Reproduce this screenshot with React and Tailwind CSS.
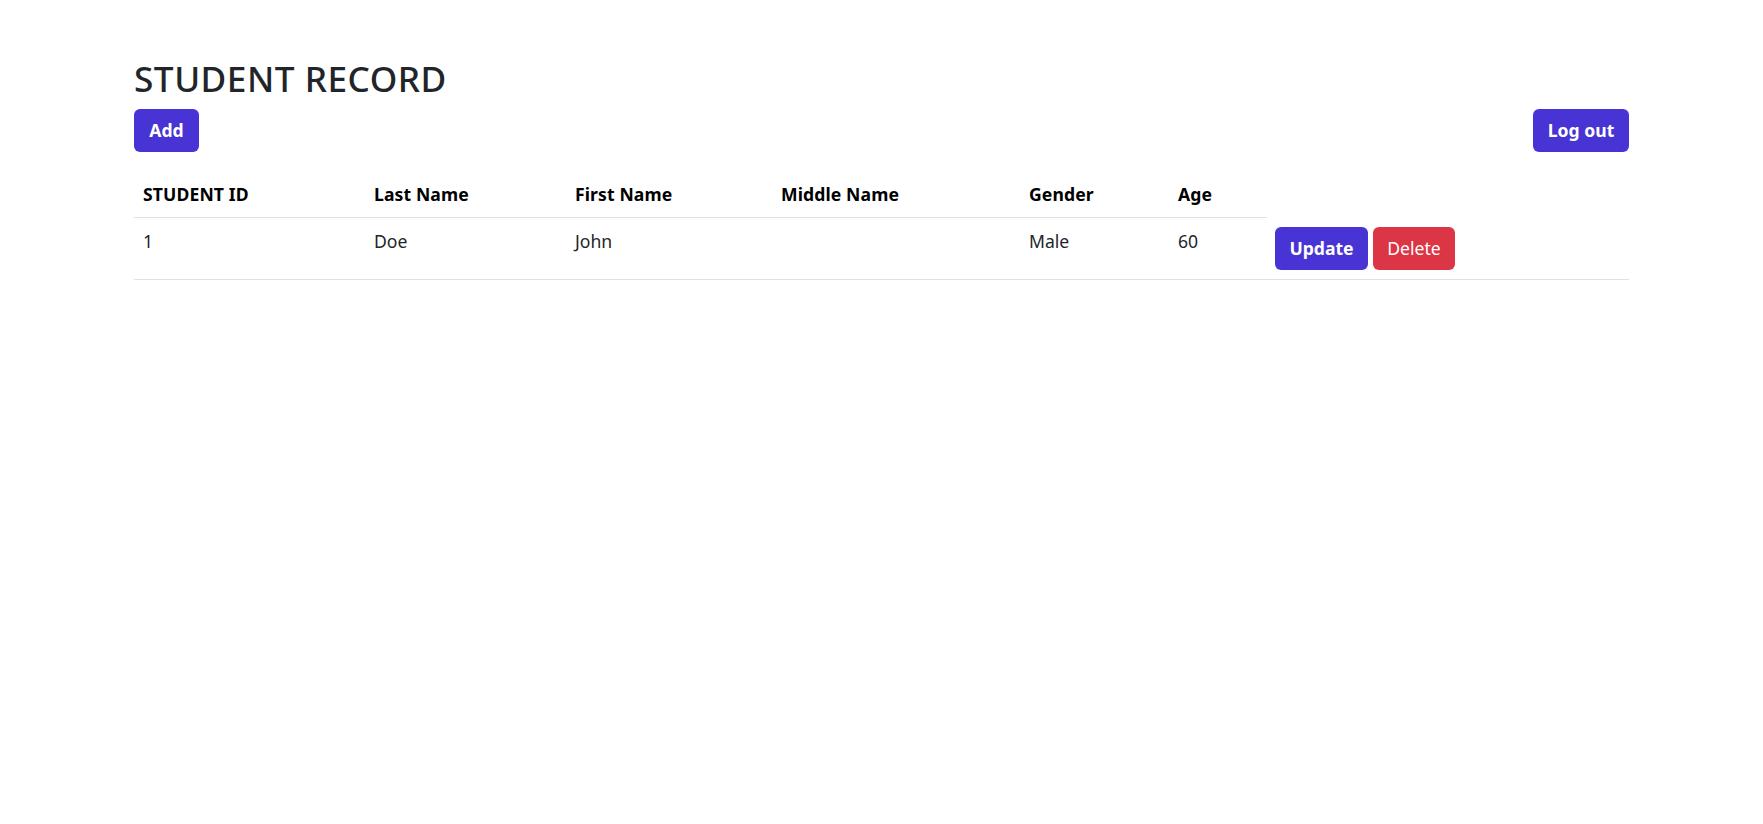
export default function App() {
  const cols = [
    "STUDENT ID",
    "Last Name",
    "First Name",
    "Middle Name",
    "Gender",
    "Age",
  ];
  const row = ["1", "Doe", "John", "", "Male", "60"];
  return (
    <div className="min-h-screen bg-white text-[#212529] font-['Noto_Sans',sans-serif]">
      <div className="mx-auto w-[1495px] pt-[57px]">
        <h2 className="text-[35.2px] font-medium leading-[1.2] mb-[10px] tracking-[0.5px]">STUDENT RECORD</h2>
        <div className="flex items-center justify-between">
          <button className="h-[43px] w-[65px] rounded-[6px] bg-[#4833d4] text-white text-[17.6px] font-bold leading-none">
            Add
          </button>
          <button className="h-[43px] w-[96px] rounded-[6px] bg-[#4833d4] text-white text-[17.6px] font-bold leading-none">
            Log out
          </button>
        </div>
        <table className="mt-[20px] w-[1495px] table-fixed border-collapse text-[17.6px] leading-[26.4px]">
          <colgroup>
            <col className="w-[231px]" />
            <col className="w-[201px]" />
            <col className="w-[206px]" />
            <col className="w-[248px]" />
            <col className="w-[149px]" />
            <col className="w-[98px]" />
            <col className="w-[362px]" />
          </colgroup>
          <thead>
            <tr>
              {cols.map((c) => (
                <th
                  key={c}
                  className="text-left font-bold text-black px-[9px] py-[9px] border-b border-[#dee2e6] align-top tracking-[0.1px]"
                >
                  {c}
                </th>
              ))}
            </tr>
          </thead>
          <tbody>
            <tr className="border-b border-[#dee2e6]">
              {row.map((v, i) => (
                <td key={i} className="px-[9px] pt-[10px] pb-[9px] align-top">
                  {v}
                </td>
              ))}
              <td className="px-[8px] pt-[10px] pb-[9px] align-top">
                <div className="flex gap-[5px]">
                  <button className="h-[43px] w-[93px] rounded-[6px] bg-[#4833d4] text-white text-[17.6px] font-bold leading-none">
                    Update
                  </button>
                  <button className="h-[43px] w-[82px] rounded-[6px] bg-[#dc3545] text-white text-[17.6px] font-normal leading-none">
                    Delete
                  </button>
                </div>
              </td>
            </tr>
          </tbody>
        </table>
      </div>
    </div>
  );
}
